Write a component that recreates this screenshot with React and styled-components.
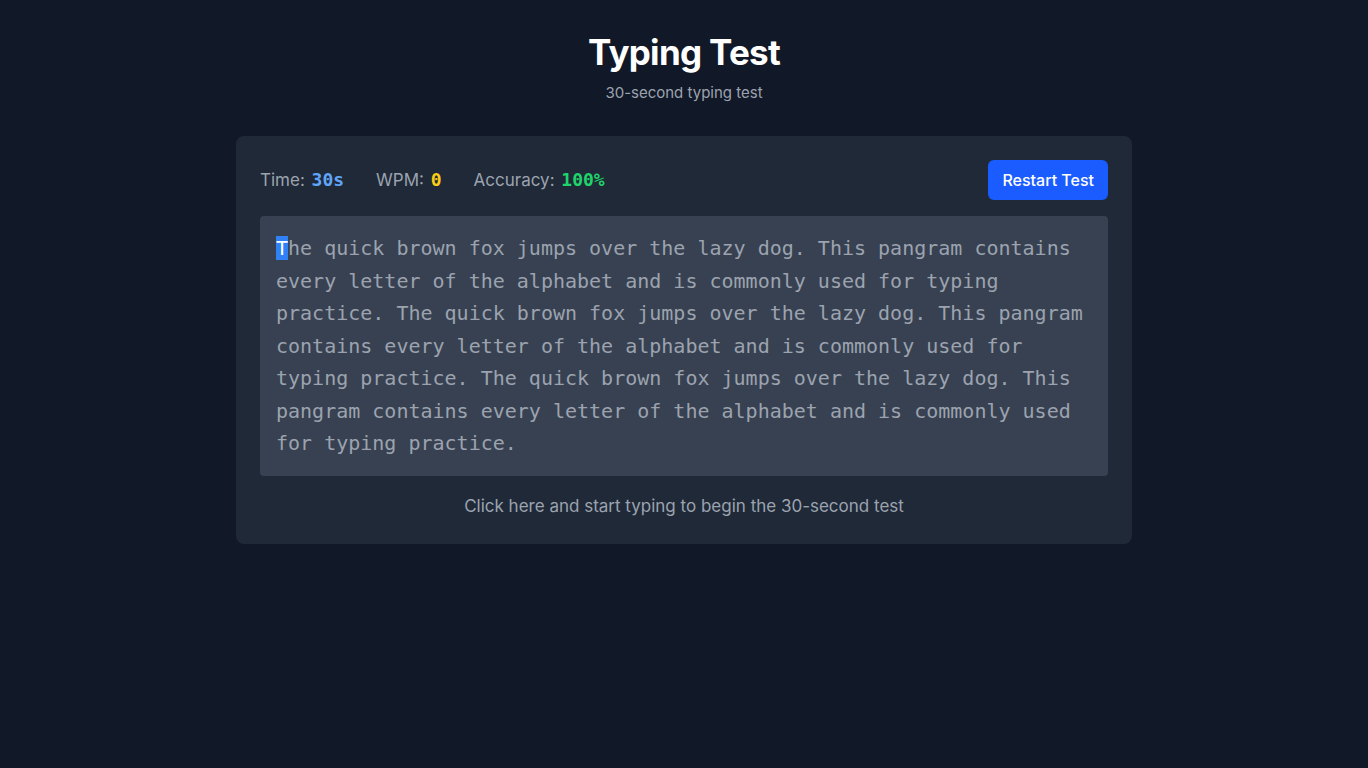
import styled, { createGlobalStyle } from 'styled-components';

const GlobalStyle = createGlobalStyle`
  body {
    margin: 0;
    background-color: #111827;
    font-family: Inter, "Liberation Sans", sans-serif;
  }
`;

const Page = styled.div`
  min-height: 100vh;
  padding: 32px 16px;
  box-sizing: border-box;
  display: flex;
  flex-direction: column;
  align-items: center;
`;

const Header = styled.header`
  text-align: center;
  margin-bottom: 31px;
`;

const Title = styled.h1`
  margin: 0;
  font-size: 35px;
  line-height: 40px;
  font-weight: 700;
  letter-spacing: -0.7px;
  color: #ffffff;
`;

const Subtitle = styled.p`
  margin: 9px 0 0;
  font-size: 15px;
  line-height: 24px;
  color: #9ca3af;
`;

const Card = styled.div`
  width: 896px;
  box-sizing: border-box;
  background-color: #1f2937;
  border-radius: 8px;
  padding: 24px;
`;

const StatsRow = styled.div`
  display: flex;
  justify-content: space-between;
  align-items: center;
  margin-bottom: 16px;
`;

const Stats = styled.div`
  display: flex;
  align-items: center;
  gap: 32px;
`;

const Stat = styled.div`
  font-size: 17px;
  line-height: 24px;
  color: #9ca3af;
`;

const Value = styled.span`
  margin-left: 2px;
  font-family: "DejaVu Sans Mono", "Liberation Mono", monospace;
  font-weight: 700;
  font-size: 18px;
  color: ${(p) => p.color};
`;

const Button = styled.button`
  height: 40px;
  padding: 0 14px;
  border: none;
  border-radius: 6px;
  background-color: #1a5cff;
  color: #ffffff;
  font-family: inherit;
  font-size: 16px;
  font-weight: 500;
  cursor: pointer;
  &:hover {
    background-color: #1549d6;
  }
`;

const TextArea = styled.div`
  background-color: #374151;
  border-radius: 4px;
  padding: 16px;
  font-family: "DejaVu Sans Mono", "Liberation Mono", monospace;
  font-size: 20px;
  line-height: 32.5px;
  color: #9ca3af;
  white-space: pre-wrap;
`;

const Cursor = styled.span`
  background-color: #3080f6;
  color: #ffffff;
`;

const Hint = styled.p`
  margin: 16px 0 0;
  text-align: center;
  font-size: 17px;
  line-height: 28px;
  color: #9ca3af;
`;

const passage =
  'The quick brown fox jumps over the lazy dog. This pangram contains every letter of the alphabet and is commonly used for typing practice. ';

const text = (passage + passage + passage).trim();

export default function App() {
  return (
    <>
      <GlobalStyle />
      <Page>
        <Header>
          <Title>Typing Test</Title>
          <Subtitle>30-second typing test</Subtitle>
        </Header>
        <Card>
          <StatsRow>
            <Stats>
              <Stat>
                Time: <Value color='#60a5fa'>30s</Value>
              </Stat>
              <Stat>
                WPM: <Value color='#facc15'>0</Value>
              </Stat>
              <Stat>
                Accuracy: <Value color='#1fd46a'>100%</Value>
              </Stat>
            </Stats>
            <Button>Restart Test</Button>
          </StatsRow>
          <TextArea>
            <Cursor>{text[0]}</Cursor>
            {text.slice(1)}
          </TextArea>
          <Hint>Click here and start typing to begin the 30-second test</Hint>
        </Card>
      </Page>
    </>
  );
}
